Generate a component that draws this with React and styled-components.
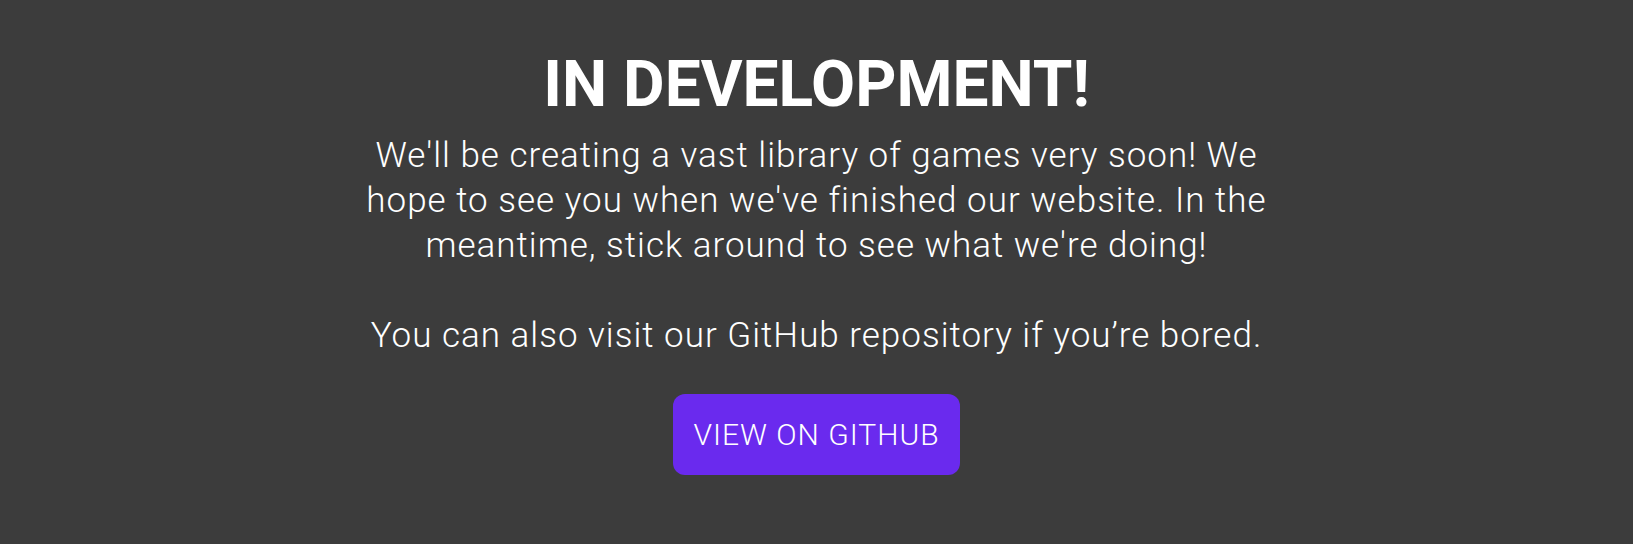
import styled, { createGlobalStyle } from "styled-components";

const GlobalStyle = createGlobalStyle`
  html, body {
    margin: 0;
    padding: 0;
    background-color: #3c3c3c;
    font-family: Roboto, "Liberation Sans", sans-serif;
    color: #ffffff;
  }
`;

const Page = styled.main`
  min-height: 544px;
  box-sizing: border-box;
  padding-top: 47px;
  display: flex;
  flex-direction: column;
  align-items: center;
`;

const Title = styled.h1`
  margin: 0 0 11px;
  font-size: 64px;
  font-weight: 700;
  line-height: normal;
  text-align: center;
`;

const Text = styled.p`
  max-width: 920px;
  margin: 0;
  font-size: 35px;
  font-weight: 300;
  letter-spacing: 1px;
  line-height: 45px;
  text-align: center;
`;

const GithubButton = styled.a`
  display: flex;
  align-items: center;
  justify-content: center;
  box-sizing: border-box;
  margin-top: 36px;
  height: 81px;
  padding: 0 20px;
  border-radius: 12px;
  background-color: #6a2aee;
  color: #ffffff;
  font-size: 30px;
  font-weight: 300;
  letter-spacing: 1px;
  text-decoration: none;
  text-transform: uppercase;
`;

export default function App() {
  return (
    <>
      <GlobalStyle />
      <Page>
        <Title>IN DEVELOPMENT!</Title>
        <Text>
          We'll be creating a vast library of games very soon! We hope to see
          you when we've finished our website. In the meantime, stick around to
          see what we're doing!
          <br />
          <br />
          You can also visit our GitHub repository if you’re bored.
        </Text>
        <GithubButton href="#">View on GitHub</GithubButton>
      </Page>
    </>
  );
}
